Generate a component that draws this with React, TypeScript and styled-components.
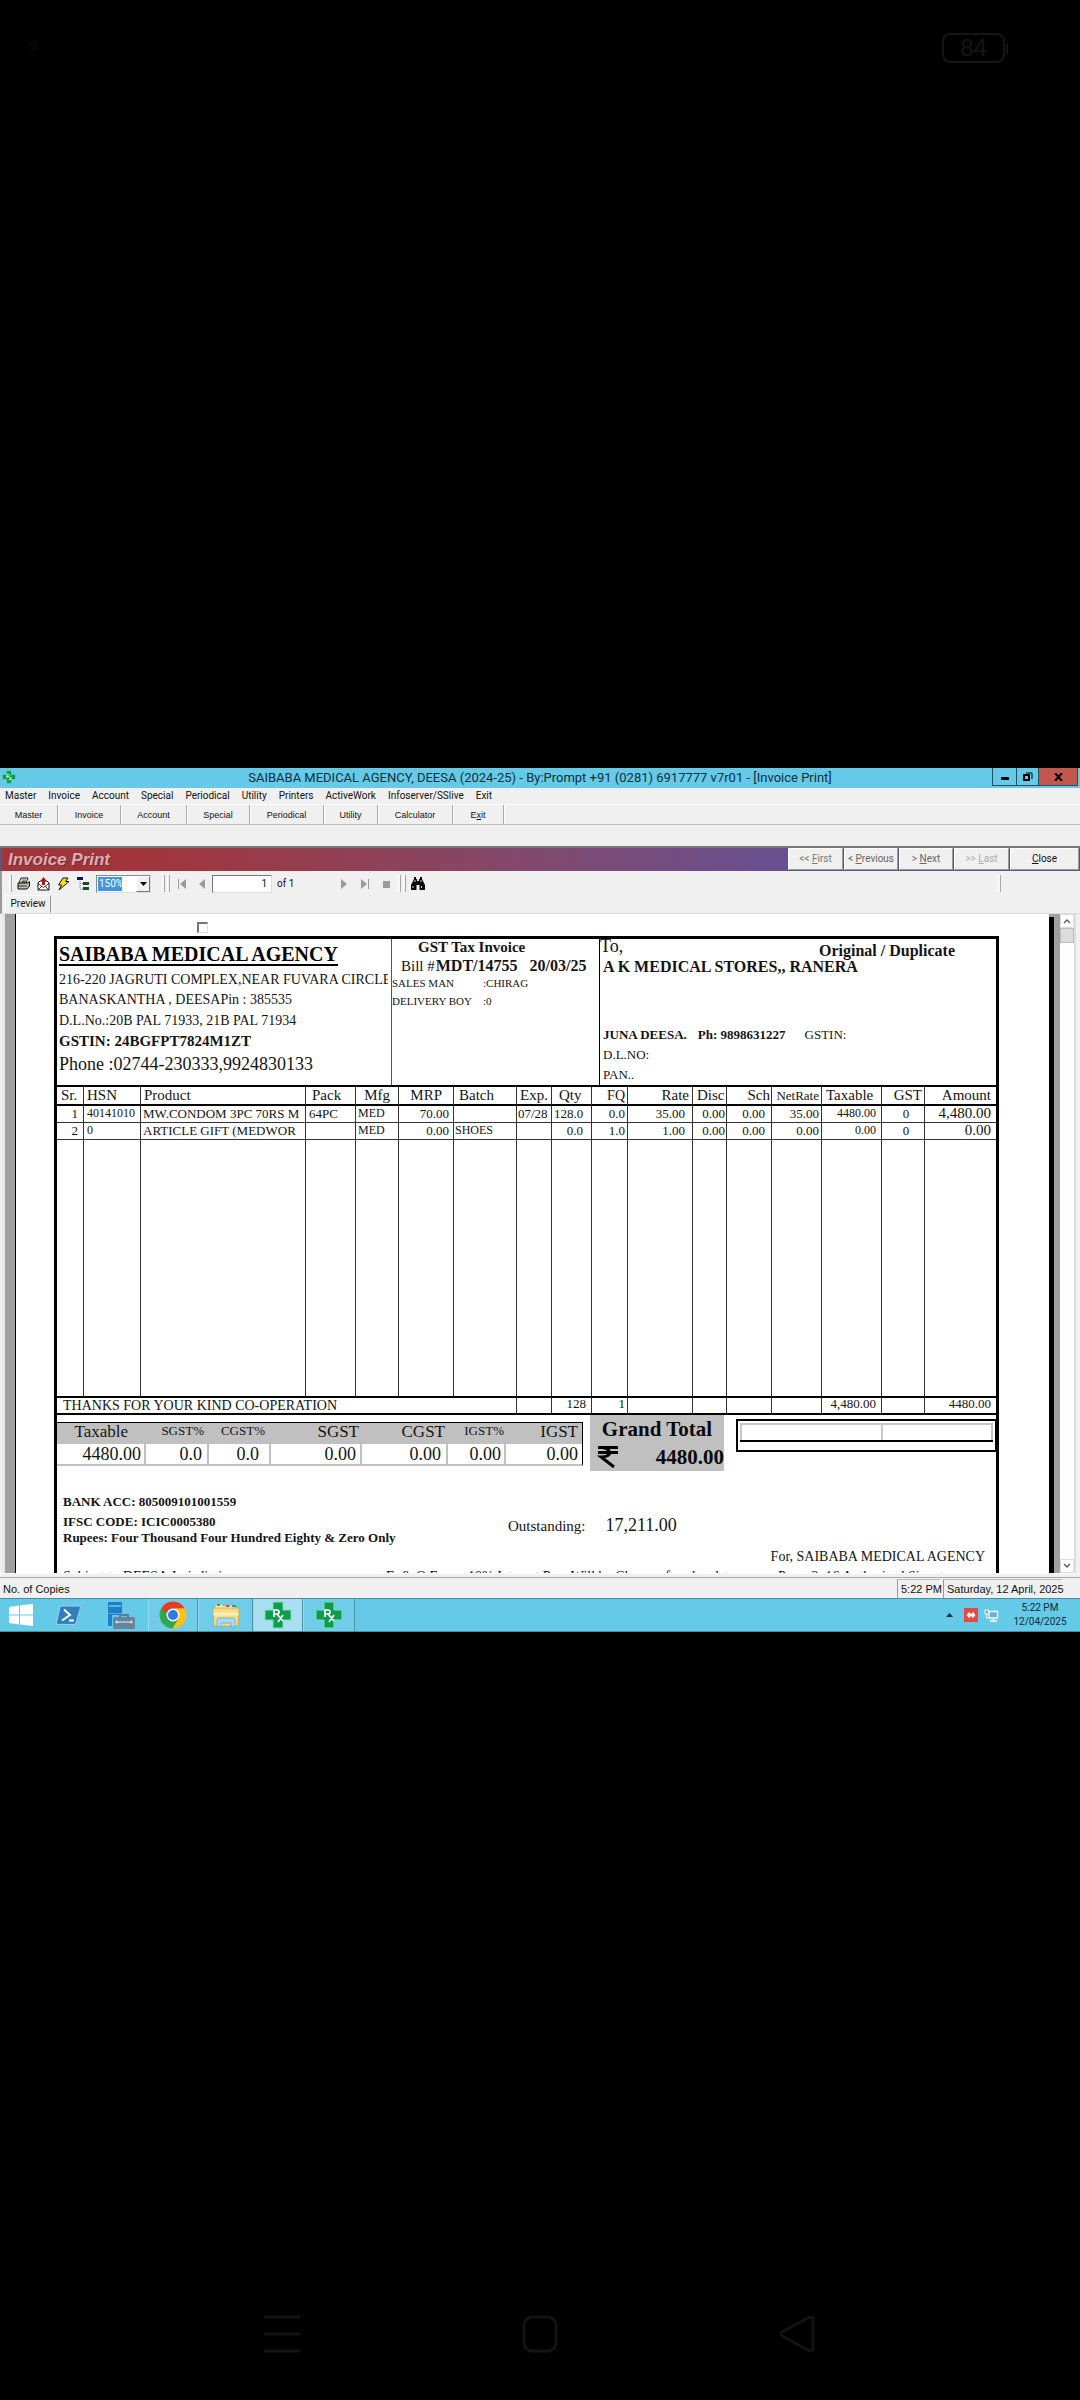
import React from "react";
import styled, { createGlobalStyle, css } from "styled-components";

const serif = `"Liberation Serif", "Times New Roman", serif`;
const sans = `"Liberation Sans", Arial, sans-serif`;
const ui = `Roboto, "Segoe UI", sans-serif`;

const GlobalStyle = createGlobalStyle`
  *, *::before, *::after { box-sizing: border-box; }
  body { margin: 0; background: #000; }
  button, input, select { font: inherit; color: inherit; margin: 0; }
  button { padding: 0; border: 0; background: none; }
`;

/* ---------- phone shell ---------- */

const Phone = styled.div`
  display: grid;
  grid-template-rows: 1fr auto 1fr;
  min-height: 100vh;
  background: #000;
`;

const PhoneTop = styled.header`
  display: flex;
  justify-content: space-between;
  align-items: flex-start;
  padding: 33px 72px 0 28px;
  color: #151515;
`;

const CameraDot = styled.i`
  width: 11px;
  height: 11px;
  margin-top: 7px;
  border-radius: 50%;
  background: #060606;
`;

const Battery = styled.div`
  display: flex;
  align-items: center;
  gap: 1px;
  font: 24px/26px ${sans};
  &::after {
    content: "";
    width: 2px;
    height: 11px;
    background: #151515;
  }
`;

const BatteryBody = styled.span`
  width: 63px;
  border: 2px solid #151515;
  border-radius: 8px;
  text-align: center;
`;

const PhoneNav = styled.nav`
  display: flex;
  justify-content: space-between;
  align-self: end;
  padding: 0 264px 47px;
`;

const NavButton = styled.button`
  width: 36px;
  height: 38px;
  color: #131313;
  svg { display: block; }
`;

/* ---------- application window ---------- */

const Window = styled.main`
  display: flex;
  flex-direction: column;
  background: #f0f0f0;
  color: #111;
  font: 10px/14px ${ui};
`;

const TitleBar = styled.header`
  display: grid;
  grid-template-columns: 88px 1fr 88px;
  height: 20px;
  background: #65c9e8;
`;

const AppIcon = styled.span`
  padding: 2px;
  svg { display: block; }
`;

const WindowTitle = styled.h1`
  margin: 0;
  font: 400 13px/20px ${ui};
  color: #10303a;
  text-align: center;
  white-space: nowrap;
`;

const WindowButtons = styled.div`
  display: flex;
  justify-content: flex-end;
  padding-right: 2px;
`;

const WindowButton = styled.button<{ $w: number; $close?: boolean }>`
  display: grid;
  place-items: center;
  width: ${(p) => p.$w}px;
  height: 18px;
  border: 1px solid #24515f;
  border-top: 0;
  margin-left: -1px;
  background: ${(p) => (p.$close ? "#c2574d" : "transparent")};
`;

const MenuBar = styled.nav`
  display: flex;
  gap: 12px;
  height: 16px;
  padding-left: 5px;
  font: 10px/16px ${ui};
`;

const MenuLink = styled.a`
  color: #111;
  text-decoration: none;
`;

const ModuleBar = styled.div`
  display: flex;
  height: 21px;
  border-top: 1px solid #fff;
  border-bottom: 1px solid #bbb;
`;

const ModuleButton = styled.button<{ $w: number }>`
  width: ${(p) => p.$w}px;
  border-right: 1px solid #aaa;
  box-shadow: 1px 0 0 #fff;
  font: 9px/18px ${sans};
`;

const FormHeader = styled.div`
  display: flex;
  height: 25px;
  margin-top: 21px;
  border-top: 2px solid #777;
  padding: 0 1px 0 2px;
  background: #5c5680;
`;

const FormTitle = styled.h2`
  flex: 1;
  margin: 0;
  padding-left: 6px;
  background: linear-gradient(90deg, #a1353b 0%, #a1353b 18%, #874665 60%, #675092 100%);
  color: #d8aeb2;
  font: italic 700 17px/24px ${sans};
  text-shadow: 1px 1px 0 #7c2c34;
`;

const FormButtons = styled.div`
  display: flex;
  gap: 1px;
`;

const FormButton = styled.button<{ $w: number; $tone: string }>`
  width: ${(p) => p.$w}px;
  margin-bottom: 1px;
  background: #f0f0f0;
  border: 1px solid;
  border-color: #fff #9a9a9a #9a9a9a #fff;
  color: ${(p) => p.$tone};
  font: 10px/20px ${ui};
`;

const ReportBar = styled.div`
  display: flex;
  align-items: center;
  height: 24px;
  padding: 1px 79px 0 7px;
  border-left: 2px solid #999;
`;

const Grip = styled.i<{ $before?: number; $after?: number }>`
  width: 3px;
  height: 17px;
  margin-left: ${(p) => p.$before ?? 0}px;
  margin-right: ${(p) => p.$after ?? 0}px;
  border-right: 1px solid #a8a8a8;
  border-left: 1px solid #fff;
`;

const ToolGroup = styled.div<{ $gap: number; $before?: number }>`
  display: flex;
  align-items: center;
  gap: ${(p) => p.$gap}px;
  margin-left: ${(p) => p.$before ?? 0}px;
`;

const Tool = styled.button`
  display: block;
  svg { display: block; }
`;

const ZoomBox = styled.span`
  display: flex;
  width: 55px;
  height: 18px;
  margin-left: 6px;
  border: 1px solid #888;
  border-right-color: #ddd;
  border-bottom-color: #ddd;
  background: #fff;
`;

const ZoomSelect = styled.select`
  flex: 1;
  min-width: 0;
  appearance: none;
  padding: 0 0 0 1px;
  border: 1px solid #fff;
  border-radius: 0;
  background: linear-gradient(90deg, #3f97e4 24px, #fff 24px);
  background-clip: padding-box;
  color: #fff;
  font: 10px/14px ${ui};
`;

const ComboArrow = styled.span`
  display: grid;
  place-items: center;
  width: 14px;
  border: 1px solid;
  border-color: #fff #777 #777 #fff;
  background: #f0f0f0;
`;

const PageLabel = styled.label`
  display: flex;
  align-items: center;
  gap: 5px;
  margin-left: 7px;
`;

const PageInput = styled.input`
  width: 60px;
  height: 18px;
  padding: 0 4px;
  border: 1px solid #777;
  border-right-color: #ddd;
  border-bottom-color: #ddd;
  background: #fff;
  text-align: right;
`;

const Spacer = styled.span`
  flex: 1;
`;

const TabStrip = styled.div`
  display: flex;
  height: 19px;
  padding-left: 3px;
  border-left: 2px solid #999;
  border-bottom: 1px solid #ddd;
`;

const Tab = styled.button`
  width: 46px;
  border: 1px solid;
  border-color: #fff #999 transparent #fff;
  font: 10px/16px ${ui};
`;

/* ---------- report viewport ---------- */

const Viewport = styled.section`
  display: grid;
  grid-template-columns: 1fr 14px;
  height: 659px;
  margin: 0 4px 0 2px;
  border-left: 3px solid #e8e8e8;
  border-right: 2px solid #ddd;
  overflow: hidden;
`;

const Canvas = styled.div`
  min-width: 0;
  padding: 0 11px 0 10px;
  overflow: hidden;
  background: #a0a0a0;
`;

const Sheet = styled.article`
  padding: 0 50px 0 38px;
  border-left: 1px solid #000;
  background: #fff;
  box-shadow: 5px 3px 0 #000;
  color: #141414;
  font-family: ${serif};
`;

const ScrollTrack = styled.div`
  display: flex;
  flex-direction: column;
  background: #fdfdfd;
`;

const ScrollButton = styled.button`
  display: grid;
  place-items: center;
  height: 14px;
  border: 1px solid #ddd;
  background: #fff;
`;

const ScrollThumb = styled.i`
  height: 15px;
  border: 1px solid #bbb;
  background: #dcdcdc;
`;

const SelectRow = styled.div`
  display: flex;
  height: 22px;
  padding: 8px 0 0 143px;
`;

const Tick = styled.input`
  appearance: none;
  width: 11px;
  height: 11px;
  border: 1px solid #ddd;
  border-top: 2px solid #777;
  border-left: 2px solid #777;
`;

const Frame = styled.div`
  border: 3px solid #000;
  border-bottom: 0;
`;

/* ---------- invoice header ---------- */

const Parties = styled.div`
  display: grid;
  grid-template-columns: 335px 208px 1fr;
  height: 146px;
`;

const Party = styled.section<{ $rule?: string; $pad?: string; $grow?: boolean }>`
  display: flex;
  flex-direction: column;
  flex: ${(p) => (p.$grow ? "1" : "initial")};
  min-width: 0;
  padding: ${(p) => p.$pad ?? "0"};
  border-right: ${(p) => (p.$rule ? `1px solid ${p.$rule}` : "0")};
`;

const Line = styled.p<{ $size: number; $lh: number; $bold?: boolean; $clip?: boolean }>`
  margin: 0;
  font-size: ${(p) => p.$size}px;
  line-height: ${(p) => p.$lh}px;
  font-weight: ${(p) => (p.$bold ? 700 : 400)};
  white-space: nowrap;
  ${(p) =>
    p.$clip &&
    css`
      margin-right: 3px;
      overflow: hidden;
    `}
`;

const AgencyName = styled.h3`
  align-self: flex-start;
  height: 23px;
  margin: 0 0 3px;
  border-bottom: 2px solid #000;
  color: #000;
  font: 700 20px/22px ${serif};
  white-space: nowrap;
`;

const InvoiceTitle = styled.h3`
  margin: 0 0 0 26px;
  font: 700 15px/16px ${serif};
`;

const BillRow = styled.div`
  display: flex;
  align-items: baseline;
  height: 19px;
  padding-left: 9px;
  font-size: 15px;
  line-height: 21px;
  white-space: nowrap;
  strong { font-size: 16px; }
  strong:first-of-type { margin: 0 12px 0 1px; }
`;

const StaffList = styled.dl`
  display: grid;
  grid-template-columns: 91px 1fr;
  margin: 0;
  font-size: 11px;
  line-height: 18px;
  dd { margin: 0; }
`;

const ToRow = styled.div`
  display: flex;
  justify-content: space-between;
  height: 18px;
  padding-right: 41px;
`;

const ContactRow = styled.div`
  display: flex;
  margin-top: auto;
  gap: 19px;
  strong + strong { margin-left: 11px; }
`;

/* ---------- item table ---------- */

const Items = styled.table`
  width: 100%;
  table-layout: fixed;
  border-collapse: separate;
  border-spacing: 0;
  border-top: 2px solid #000;
`;

type CellProps = {
  $align?: "left" | "right" | "center";
  $size?: number;
  $pr?: number;
  $pl?: number;
};

const cell = css<CellProps>`
  height: inherit;
  padding: 0 ${(p) => p.$pr ?? 2}px 0 ${(p) => p.$pl ?? 2}px;
  border-right: 1px solid #333;
  font-weight: 400;
  font-size: ${(p) => p.$size ?? 13}px;
  line-height: 15px;
  text-align: ${(p) => p.$align ?? "left"};
  vertical-align: top;
  white-space: nowrap;
  overflow: hidden;
  &:last-child { border-right: 0; }
`;

const Th = styled.th<CellProps>`
  ${cell}
  line-height: 17px;
  border-bottom: 2px solid #000;
`;

const Td = styled.td<CellProps>`
  ${cell}
  border-bottom: 1px solid #333;
`;

const BlankTd = styled.td<CellProps>`
  ${cell}
  border-bottom: 0;
`;

const TotalTd = styled.td<CellProps>`
  ${cell}
  line-height: 11px;
  border-top: 2px solid #000;
  border-bottom: 2px solid #000;
`;

const Thanks = styled.span`
  font-size: 14px;
  line-height: 15px;
`;

const Row = styled.tr<{ $h: number }>`
  height: ${(p) => p.$h}px;
`;

/* ---------- summary ---------- */

const Summary = styled.div`
  display: flex;
  align-items: flex-start;
  height: 56px;
`;

const TaxTable = styled.table`
  width: 526px;
  margin: 7px 7px 0 0;
  table-layout: fixed;
  border-collapse: separate;
  border-spacing: 0;
  border-top: 1px solid #000;
`;

const TaxTh = styled.th<{ $small?: boolean; $pr: number }>`
  height: 21px;
  padding: 0 ${(p) => p.$pr}px 0 0;
  background: #c0c0c0;
  font-size: ${(p) => (p.$small ? 13 : 17)}px;
  font-weight: 400;
  line-height: ${(p) => (p.$small ? 15 : 17)}px;
  text-align: right;
  vertical-align: top;
  &:last-child { border-right: 1px solid #000; }
`;

const TaxTd = styled.td<{ $pr: number }>`
  height: 22px;
  padding: 0 ${(p) => p.$pr}px 0 0;
  border-right: 2px solid #c0c0c0;
  border-bottom: 2px solid #c0c0c0;
  font-size: 18px;
  line-height: 20px;
  text-align: right;
  &:last-child { border-right: 1px solid #000; }
`;

const GrandTotal = styled.section`
  width: 134px;
  height: 56px;
  background: #c0c0c0;
  color: #0a0a0a;
  font-size: 21px;
  font-weight: 700;
  line-height: 28px;
`;

const GrandLabel = styled.h4`
  margin: 0;
  font: inherit;
  text-align: center;
`;

const GrandValue = styled.div`
  display: flex;
  justify-content: space-between;
  padding: 0 0 0 7px;
  svg { display: block; margin-top: 3px; }
`;

const NoteBox = styled.div`
  flex: 1;
  height: 33px;
  margin: 4px 0 0 12px;
  padding: 2px;
  border: 2px solid #000;
  border-right-width: 1px;
`;

const NoteSlots = styled.div`
  display: grid;
  grid-template-columns: 143px 1fr;
  height: 19px;
  border-bottom: 2px solid #000;
`;

const NoteSlot = styled.i`
  border: 2px solid #c8c8c8;
  border-bottom: 0;
  & + & { border-left: 0; }
`;

const Footer = styled.div`
  display: grid;
  grid-template-columns: 445px 1fr;
  height: 76px;
  padding: 21px 0 0 6px;
`;

const Outstanding = styled.div`
  display: flex;
  align-items: baseline;
  gap: 20px;
  padding-top: 23px;
  font-size: 15px;
  line-height: 20px;
  span { font-size: 18px; }
`;

const Signature = styled.p`
  margin: 0;
  padding-right: 11px;
  font-size: 14px;
  line-height: 20px;
  text-align: right;
`;

const Terms = styled.div`
  display: grid;
  grid-template-columns: 323px 82px 310px 1fr;
  padding-left: 6px;
  font-size: 14px;
  line-height: 20px;
  white-space: nowrap;
`;

/* ---------- status bar and taskbar ---------- */

const StatusBar = styled.footer`
  display: flex;
  height: 25px;
  padding: 5px 17px 0 3px;
  border-top: 1px solid #fff;
  box-shadow: inset 0 3px 0 #f0f0f0, inset 0 4px 0 #aaa;
  font: 11px/20px ${sans};
`;

const StatusPane = styled.span<{ $w: number }>`
  width: ${(p) => p.$w}px;
  margin-left: 2px;
  padding-left: 3px;
  border-left: 1px solid #999;
  border-right: 1px solid #fff;
  border-top: 1px solid #bbb;
  line-height: 18px;
  white-space: nowrap;
`;

const Taskbar = styled.nav`
  display: flex;
  height: 34px;
  border-top: 1px solid #4a8ba0;
  border-bottom: 1px solid #4a8ba0;
  background: #65c9e8;
`;

const TaskButton = styled.button<{ $w: number; $open?: boolean; $active?: boolean }>`
  display: grid;
  place-items: center;
  width: ${(p) => p.$w}px;
  border-right: ${(p) => (p.$open ? "1px solid #4793ab" : "0")};
  border-left: ${(p) => (p.$open ? "1px solid #8fdcf3" : "0")};
  background: ${(p) => (p.$active ? "#a9dff1" : p.$open ? "#6fcdea" : "transparent")};
`;

const Tray = styled.div`
  display: flex;
  align-items: center;
  gap: 6px;
  margin-left: auto;
  padding-right: 11px;
  color: #0e2c36;
  svg { display: block; }
  svg:first-child { margin-right: 5px; }
`;

const Clock = styled.time`
  width: 58px;
  margin-left: 6px;
  font: 10px/14px ${ui};
  text-align: center;
  white-space: nowrap;
`;

/* ---------- drawings ---------- */

const RxIcon = ({ size }: { size: number }) => (
  <svg width={size} height={size} viewBox="0 0 28 28" aria-hidden="true">
    <path d="M9 1h10v8h8v10h-8v8H9v-8H1V9h8z" fill="#0d9c50" stroke="#7ee0b0" strokeWidth="1" />
    <path d="M10 16V9h3a2 2 0 0 1 0 4h-3M13 13l6 7M19 14l-5 7" fill="none" stroke="#fff" strokeWidth="1.7" />
  </svg>
);

const StartIcon = () => (
  <svg width="24" height="22" viewBox="0 0 24 22" aria-hidden="true">
    <path d="M0 3l10-1.500v9H0zM11 1.300L24 0v10.500H11zM0 11.500h10v9L0 19zM11 11.500h13V22l-13-1.500z" fill="#fff" />
  </svg>
);

const ShellIcon = () => (
  <svg width="25" height="20" viewBox="0 0 25 20" aria-hidden="true">
    <path d="M5 1h18a1.500 1.500 0 0 1 1.400 2L20 18a2 2 0 0 1-2 1.400H1.500A1.200 1.200 0 0 1 .4 18L4 2a1.500 1.500 0 0 1 1-1z" fill="#2f7fc0" stroke="#a9cfe6" />
    <path d="M8 4.500l6 5.500-8 5.500M13 15.500h5" fill="none" stroke="#fff" strokeWidth="2" />
  </svg>
);

const ServerIcon = () => (
  <svg width="28" height="27" viewBox="0 0 28 27" aria-hidden="true">
    <path d="M0 0h14v24H0z" fill="#1c80c8" />
    <path d="M1 4h12" stroke="#7cc4ee" strokeWidth="1.500" />
    <path d="M0 11h14v1H0z" fill="#4fa6de" />
    <path d="M4 13h24v14H4z" fill="#65c9e8" />
    <path d="M12 15v-2h8v2" fill="none" stroke="#5d7c90" strokeWidth="2" />
    <rect x="5" y="15" width="22" height="12" rx="1.500" fill="#67849a" />
    <path d="M7 20h18M9 18.500v3M23 18.500v3" fill="none" stroke="#e4eff4" />
  </svg>
);

const ChromeIcon = () => (
  <svg width="28" height="28" viewBox="0 0 28 28" aria-hidden="true">
    <circle cx="14" cy="14" r="13.500" fill="#fbc116" />
    <path d="M2.300 7.200A13.500 13.500 0 0 0 13.500 27.500l6-10L14 14z" fill="#2da94f" />
    <path d="M2.300 7.200L8.400 17.500 14 14l2-7z" fill="#2da94f" />
    <path d="M2.300 7.200A13.500 13.500 0 0 1 25.700 7.300H14a6.800 6.800 0 0 0-6.500 4.700z" fill="#e33b2e" />
    <circle cx="14" cy="14" r="6.500" fill="#fff" />
    <circle cx="14" cy="14" r="5" fill="#2f78e6" />
  </svg>
);

const FolderIcon = () => (
  <svg width="28" height="26" viewBox="0 0 28 26" aria-hidden="true">
    <path d="M3 3l6-1 2 2 12-1v4H3z" fill="#f3ecc4" stroke="#c9a850" strokeWidth=".7" />
    <path d="M5 3h3" stroke="#3a9e4a" strokeWidth="2" />
    <path d="M14 4h3" stroke="#d2503c" strokeWidth="2" />
    <path d="M20 4h4" stroke="#3a8ccc" strokeWidth="2" />
    <path d="M1 6h26l-1 18H2z" fill="#f5dd86" stroke="#d0a848" strokeWidth=".8" />
    <path d="M1.500 12h25" stroke="#fbefb8" strokeWidth="3" />
    <path d="M5 25v-7a2 2 0 0 1 2-2h14a2 2 0 0 1 2 2v7h-4v-4H9v4z" fill="#a9dcf2" stroke="#5fa9cc" strokeWidth=".8" />
  </svg>
);

const PrintIcon = () => (
  <svg width="13" height="13" viewBox="0 0 13 13" aria-hidden="true">
    <path d="M4 1h7l-2 5H2z" fill="#fff" stroke="#111" />
    <path d="M1 6h10l1.500-1.500V9L10 12H1z" fill="#b9bcae" stroke="#111" />
    <path d="M1 9h9M5 3h4M4.500 4.500h4" stroke="#111" strokeWidth=".8" />
    <path d="M8 7.500h1.500" stroke="#e8e030" />
  </svg>
);

const ExportIcon = () => (
  <svg width="13" height="14" viewBox="0 0 13 14" aria-hidden="true">
    <path d="M1 6l2-2h7l2 2v7H1z" fill="#fff" stroke="#111" />
    <path d="M1 6.500l5.500 4 5.500-4M1 13l4-4M12 13L8 9" fill="none" stroke="#111" strokeWidth=".8" />
    <path d="M5 8V4H3.500l3-4 3 4H8v4z" fill="#b5121b" />
  </svg>
);

const BoltIcon = () => (
  <svg width="13" height="14" viewBox="0 0 13 14" aria-hidden="true">
    <path d="M6 1h5L8.500 4.500H12L2 13l2.500-5H1.500z" fill="#f4e41c" stroke="#111" />
  </svg>
);

const TreeIcon = () => (
  <svg width="13" height="13" viewBox="0 0 13 13" aria-hidden="true">
    <path d="M0 0h6v3H0z" fill="#14145c" />
    <path d="M3 4v8h3M3 6.500h3" fill="none" stroke="#777" strokeDasharray="1 1" />
    <path d="M6 5h6v3H6zM6 10h6v3H6z" fill="#174d22" />
  </svg>
);

const Arrow = ({ d, w }: { d: string; w: number }) => (
  <svg width={w} height="10" viewBox={`0 0 ${w} 10`} aria-hidden="true">
    <path d={d} fill="#9a9a9a" />
  </svg>
);

const BinocularsIcon = () => (
  <svg width="14" height="13" viewBox="0 0 14 13" aria-hidden="true">
    <path d="M3 0h2v2h1v2h2V2h1V0h2v2l1 2 2 4v5H8.500V8h-3v5H0V8l2-4 1-2z" fill="#0a0a0a" />
    <path d="M2 9v2M4 3v2M10 3v2M10.500 9v2" stroke="#fff" strokeWidth=".8" />
  </svg>
);

const Chevron = ({ d }: { d: string }) => (
  <svg width="8" height="6" viewBox="0 0 8 6" aria-hidden="true">
    <path d={d} fill="none" stroke="#555" strokeWidth="1.300" />
  </svg>
);

const RupeeIcon = () => (
  <svg width="22" height="22" viewBox="0 0 22 22" aria-hidden="true">
    <path d="M1 1.500h20M1 6.500h20M4 1.500c10 0 13 9.500 0 9.500l13 10" fill="none" stroke="#000" strokeWidth="3" />
  </svg>
);

/* ---------- data ---------- */

const menus = ["Master", "Invoice", "Account", "Special", "Periodical", "Utility", "Printers", "ActiveWork", "Infoserver/SSlive", "Exit"];

const modules: [React.ReactNode, number][] = [
  ["Master", 58],
  ["Invoice", 63],
  ["Account", 66],
  ["Special", 63],
  ["Periodical", 74],
  ["Utility", 54],
  ["Calculator", 75],
  [<>E<u>x</u>it</>, 51],
];

type Column = {
  title: string;
  width?: number;
  head: CellProps;
  body: CellProps;
  values: [string, string];
  total?: string;
};

const columns: Column[] = [
  { title: "Sr.", width: 27, head: { $size: 15, $pl: 4 }, body: { $align: "right", $pr: 5 }, values: ["1", "2"] },
  { title: "HSN", width: 57, head: { $size: 15, $pl: 3 }, body: { $size: 12, $pl: 3 }, values: ["40141010", "0"] },
  { title: "Product", head: { $size: 15, $pl: 3 }, body: { $pl: 2, $pr: 0 }, values: ["MW.CONDOM 3PC 70RS M", "ARTICLE GIFT (MEDWOR"] },
  { title: "Pack", width: 50, head: { $size: 15, $pl: 6 }, body: { $pl: 3 }, values: ["64PC", ""] },
  { title: "Mfg", width: 43, head: { $size: 15, $align: "right", $pr: 8 }, body: { $size: 12 }, values: ["MED", "MED"] },
  { title: "MRP", width: 55, head: { $size: 15, $align: "right", $pr: 11 }, body: { $align: "right", $pr: 4 }, values: ["70.00", "0.00"] },
  { title: "Batch", width: 63, head: { $size: 15, $pl: 5 }, body: { $size: 12, $pl: 1 }, values: ["", "SHOES"] },
  { title: "Exp.", width: 35, head: { $size: 15, $pl: 3 }, body: { $pl: 1 }, values: ["07/28", ""] },
  { title: "Qty", width: 40, head: { $size: 15, $pl: 7 }, body: { $align: "right", $pr: 8 }, values: ["128.0", "0.0"], total: "128" },
  { title: "FQ", width: 36, head: { $size: 14, $align: "right" }, body: { $align: "right" }, values: ["0.0", "1.0"], total: "1" },
  { title: "Rate", width: 65, head: { $size: 15, $align: "right", $pr: 3 }, body: { $align: "right", $pr: 7 }, values: ["35.00", "1.00"] },
  { title: "Disc", width: 34, head: { $size: 15, $pl: 4 }, body: { $align: "right", $pr: 1 }, values: ["0.00", "0.00"] },
  { title: "Sch", width: 45, head: { $size: 15, $align: "right", $pr: 1 }, body: { $align: "right", $pr: 6 }, values: ["0.00", "0.00"] },
  { title: "NetRate", width: 50, head: { $size: 13, $align: "right" }, body: { $align: "right" }, values: ["35.00", "0.00"] },
  { title: "Taxable", width: 60, head: { $size: 15, $pl: 4 }, body: { $size: 12, $align: "right", $pr: 5 }, values: ["4480.00", "0.00"], total: "4,480.00" },
  { title: "GST", width: 43, head: { $size: 15, $align: "right" }, body: { $size: 13, $align: "center", $pl: 8 }, values: ["0", "0"] },
  { title: "Amount", width: 71, head: { $size: 15, $align: "right", $pr: 5 }, body: { $size: 15, $align: "right", $pr: 5 }, values: ["4,480.00", "0.00"], total: "4480.00" },
];

const taxes = [
  { title: "Taxable", width: 89, value: "4480.00", pr: 3, headPr: 18 },
  { title: "SGST%", width: 63, value: "0.0", pr: 5, headPr: 5, small: true },
  { title: "CGST%", width: 62, value: "0.0", pr: 10, headPr: 6, small: true },
  { title: "SGST", width: 91, value: "0.00", pr: 4, headPr: 3 },
  { title: "CGST", width: 86, value: "0.00", pr: 5, headPr: 3 },
  { title: "IGST%", width: 58, value: "0.00", pr: 3, headPr: 2, small: true },
  { title: "IGST", width: 77, value: "0.00", pr: 4, headPr: 4 },
];

/* ---------- sections ---------- */

const ItemTable = () => (
  <Items>
    <colgroup>
      {columns.map((c) => (
        <col key={c.title} style={{ width: c.width }} />
      ))}
    </colgroup>
    <thead>
      <Row $h={19}>
        {columns.map((c) => (
          <Th key={c.title} {...c.head}>{c.title}</Th>
        ))}
      </Row>
    </thead>
    <tbody>
      {[0, 1].map((i) => (
        <Row key={i} $h={17}>
          {columns.map((c) => (
            <Td key={c.title} {...c.body}>{c.values[i]}</Td>
          ))}
        </Row>
      ))}
      <Row $h={256}>
        {columns.map((c) => (
          <BlankTd key={c.title} />
        ))}
      </Row>
    </tbody>
    <tfoot>
      <Row $h={19}>
        <TotalTd colSpan={7} $pl={6}><Thanks>THANKS FOR YOUR KIND CO-OPERATION</Thanks></TotalTd>
        {columns.slice(7).map((c) => (
          <TotalTd key={c.title} $align="right" $pr={c.title === "Qty" ? 5 : c.body.$pr}>{c.total}</TotalTd>
        ))}
      </Row>
    </tfoot>
  </Items>
);

const Invoice = () => (
  <Sheet>
    <SelectRow>
      <Tick type="checkbox" aria-label="Select invoice" />
    </SelectRow>
    <Frame>
      <Parties>
        <Party $rule="#555" $pad="4px 0 0 2px">
          <AgencyName>SAIBABA MEDICAL AGENCY</AgencyName>
          <Line $size={14} $lh={21} $clip>216-220 JAGRUTI COMPLEX,NEAR FUVARA CIRCLE</Line>
          <Line $size={14} $lh={20}>BANASKANTHA , DEESAPin : 385535</Line>
          <Line $size={14} $lh={21}>D.L.No.:20B PAL 71933, 21B PAL 71934</Line>
          <Line $size={15} $lh={21} $bold>GSTIN: 24BGFPT7824M1ZT</Line>
          <Line $size={18} $lh={24}>Phone :02744-230333,9924830133</Line>
        </Party>
        <Party $rule="#000">
          <InvoiceTitle>GST Tax Invoice</InvoiceTitle>
          <BillRow>
            Bill # <strong>MDT/14755</strong> <strong>20/03/25</strong>
          </BillRow>
          <StaffList>
            <dt>SALES MAN</dt>
            <dd>:CHIRAG</dd>
            <dt>DELIVERY BOY</dt>
            <dd>:0</dd>
          </StaffList>
        </Party>
        <Party>
          <ToRow>
            <Line $size={18} $lh={14}>To,</Line>
            <Line $size={16} $lh={24} $bold>Original / Duplicate</Line>
          </ToRow>
          <Party $pad="0 0 0 3px" $grow>
            <Line $size={16} $lh={19} $bold>A K MEDICAL STORES,, RANERA</Line>
            <ContactRow>
              <Line $size={13} $lh={20}>
                <strong>JUNA DEESA.</strong>
                <strong>Ph: 9898631227</strong>
              </Line>
              <Line $size={13} $lh={20}>GSTIN:</Line>
            </ContactRow>
            <Line $size={13} $lh={20}>D.L.NO:</Line>
            <Line $size={13} $lh={20}>PAN..</Line>
          </Party>
        </Party>
      </Parties>
      <ItemTable />
      <Summary>
        <TaxTable>
          <colgroup>
            {taxes.map((t) => (
              <col key={t.title} style={{ width: t.width }} />
            ))}
          </colgroup>
          <thead>
            <tr>
              {taxes.map((t) => (
                <TaxTh key={t.title} $small={t.small} $pr={t.headPr}>{t.title}</TaxTh>
              ))}
            </tr>
          </thead>
          <tbody>
            <tr>
              {taxes.map((t) => (
                <TaxTd key={t.title} $pr={t.pr}>{t.value}</TaxTd>
              ))}
            </tr>
          </tbody>
        </TaxTable>
        <GrandTotal>
          <GrandLabel>Grand Total</GrandLabel>
          <GrandValue>
            <RupeeIcon />
            <span>4480.00</span>
          </GrandValue>
        </GrandTotal>
        <NoteBox>
          <NoteSlots>
            <NoteSlot />
            <NoteSlot />
          </NoteSlots>
        </NoteBox>
      </Summary>
      <Footer>
        <div>
          <Line $size={13} $lh={20} $bold>BANK ACC: 805009101001559</Line>
          <Line $size={13} $lh={20} $bold>IFSC CODE: ICIC0005380</Line>
          <Line $size={13} $lh={12} $bold>Rupees: Four Thousand Four Hundred Eighty &amp; Zero Only</Line>
        </div>
        <Outstanding>
          Outstanding: <span>17,211.00</span>
        </Outstanding>
      </Footer>
      <Signature>For, SAIBABA MEDICAL AGENCY</Signature>
      <Terms>
        <span>Subject to DEESA Jurisdiction</span>
        <span>E. &amp; O.E.</span>
        <span>18% Interest Per.. Will be Charge after due date</span>
        <span>Prop. 2. 16 Authorised Signatory</span>
      </Terms>
    </Frame>
  </Sheet>
);

export default function App() {
  return (
    <>
      <GlobalStyle />
      <Phone>
        <PhoneTop>
          <CameraDot />
          <Battery>
            <BatteryBody>84</BatteryBody>
          </Battery>
        </PhoneTop>

        <Window>
          <TitleBar>
            <AppIcon><RxIcon size={14} /></AppIcon>
            <WindowTitle>SAIBABA MEDICAL AGENCY, DEESA (2024-25) - By:Prompt +91 (0281) 6917777 v7r01 - [Invoice Print]</WindowTitle>
            <WindowButtons>
              <WindowButton $w={25} aria-label="Minimize">
                <svg width="10" height="8"><path d="M1 4h8v3H1z" fill="#000" /></svg>
              </WindowButton>
              <WindowButton $w={23} aria-label="Restore">
                <svg width="10" height="9"><path d="M1 3h5v5H1z" fill="none" stroke="#000" strokeWidth="2" /><path d="M3 1h6v6" fill="none" stroke="#000" /></svg>
              </WindowButton>
              <WindowButton $w={40} $close aria-label="Close window">
                <svg width="9" height="8"><path d="M1 0l7 8M8 0L1 8" stroke="#000" strokeWidth="2" /></svg>
              </WindowButton>
            </WindowButtons>
          </TitleBar>

          <MenuBar>
            {menus.map((m) => (
              <MenuLink key={m} href="#">{m}</MenuLink>
            ))}
          </MenuBar>

          <ModuleBar>
            {modules.map(([label, w], i) => (
              <ModuleButton key={i} $w={w}>{label}</ModuleButton>
            ))}
          </ModuleBar>

          <FormHeader>
            <FormTitle>Invoice Print</FormTitle>
            <FormButtons>
              <FormButton $w={55} $tone="#777">&lt;&lt; <u>F</u>irst</FormButton>
              <FormButton $w={54} $tone="#666">&lt; <u>P</u>revious</FormButton>
              <FormButton $w={54} $tone="#666">&gt; <u>N</u>ext</FormButton>
              <FormButton $w={55} $tone="#aaa">&gt;&gt; <u>L</u>ast</FormButton>
              <FormButton $w={69} $tone="#111"><u>C</u>lose</FormButton>
            </FormButtons>
          </FormHeader>

          <ReportBar>
            <Grip $after={5} />
            <ToolGroup $gap={7}>
              <Tool aria-label="Print"><PrintIcon /></Tool>
              <Tool aria-label="Export"><ExportIcon /></Tool>
              <Tool aria-label="Refresh"><BoltIcon /></Tool>
              <Tool aria-label="Group tree"><TreeIcon /></Tool>
            </ToolGroup>
            <ZoomBox>
              <ZoomSelect aria-label="Zoom" defaultValue="150%">
                <option>150%</option>
                <option>100%</option>
              </ZoomSelect>
              <ComboArrow>
                <svg width="7" height="4"><path d="M0 0h7L3.500 4z" fill="#000" /></svg>
              </ComboArrow>
            </ZoomBox>
            <Grip $before={11} $after={2} />
            <Grip $after={8} />
            <ToolGroup $gap={13}>
              <Tool aria-label="First page"><Arrow w={8} d="M0 0h1v10H0zM8 0v10L2 5z" /></Tool>
              <Tool aria-label="Previous page"><Arrow w={6} d="M6 0v10L0 5z" /></Tool>
            </ToolGroup>
            <PageLabel>
              <PageInput defaultValue="1" aria-label="Page" />
              of 1
            </PageLabel>
            <ToolGroup $gap={14} $before={47}>
              <Tool aria-label="Next page"><Arrow w={6} d="M0 0v10l6-5z" /></Tool>
              <Tool aria-label="Last page"><Arrow w={8} d="M0 0v10l6-5zM7 0h1v10H7z" /></Tool>
              <Tool aria-label="Stop"><Arrow w={7} d="M0 2h7v7H0z" /></Tool>
            </ToolGroup>
            <Grip $before={8} $after={2} />
            <Grip $after={5} />
            <Tool aria-label="Find"><BinocularsIcon /></Tool>
            <Spacer />
            <Grip />
          </ReportBar>

          <TabStrip>
            <Tab>Preview</Tab>
          </TabStrip>

          <Viewport>
            <Canvas>
              <Invoice />
            </Canvas>
            <ScrollTrack>
              <ScrollButton aria-label="Scroll up"><Chevron d="M1 5l3-3 3 3" /></ScrollButton>
              <ScrollThumb />
              <Spacer />
              <ScrollButton aria-label="Scroll down"><Chevron d="M1 1l3 3 3-3" /></ScrollButton>
            </ScrollTrack>
          </Viewport>

          <StatusBar>
            <span>No. of Copies</span>
            <Spacer />
            <StatusPane $w={44}>5:22 PM</StatusPane>
            <StatusPane $w={120}>Saturday, 12 April, 2025</StatusPane>
          </StatusBar>

          <Taskbar>
            <TaskButton $w={42} aria-label="Start"><StartIcon /></TaskButton>
            <TaskButton $w={53} aria-label="PowerShell"><ShellIcon /></TaskButton>
            <TaskButton $w={53} aria-label="Server Manager"><ServerIcon /></TaskButton>
            <TaskButton $w={50} $open aria-label="Chrome"><ChromeIcon /></TaskButton>
            <TaskButton $w={55} $open aria-label="File Explorer"><FolderIcon /></TaskButton>
            <TaskButton $w={50} $open $active aria-label="Pharmacy, window 1"><RxIcon size={28} /></TaskButton>
            <TaskButton $w={52} $open aria-label="Pharmacy, window 2"><RxIcon size={28} /></TaskButton>
            <Tray>
              <svg width="7" height="4"><path d="M0 4h7L3.500 0z" fill="#0e2c36" /></svg>
              <svg width="14" height="14" viewBox="0 0 14 14">
                <path d="M0 0h14v14H0z" fill="#e8483f" />
                <path d="M5 4L2.500 7 5 10l2-2 2 2 2.500-3L9 4 7 6z" fill="#fff" />
              </svg>
              <svg width="15" height="13" viewBox="0 0 15 13">
                <path d="M5 2.500h8.500v6.500H5zM9.500 9v3M6 12h7" fill="#65b4cc" stroke="#f4fcff" strokeWidth="1.300" />
                <path d="M1 1h3.500v4H1zM2.500 5v4H5" fill="#65b4cc" stroke="#f4fcff" />
              </svg>
              <Clock>
                5:22 PM
                <br />
                12/04/2025
              </Clock>
            </Tray>
          </Taskbar>
        </Window>

        <PhoneNav>
          <NavButton aria-label="Recent apps">
            <svg width="36" height="38"><path d="M0 2h36M0 19h36M0 36h36" stroke="#131313" strokeWidth="3" /></svg>
          </NavButton>
          <NavButton aria-label="Home">
            <svg width="36" height="38"><rect x="2" y="2" width="32" height="34" rx="8" fill="none" stroke="#131313" strokeWidth="3" /></svg>
          </NavButton>
          <NavButton aria-label="Back">
            <svg width="36" height="38"><path d="M3 16.500L29 2.500q4-1 4 2v29q0 3-4 2L3 21.500q-3-2.500 0-5z" fill="none" stroke="#131313" strokeWidth="3" /></svg>
          </NavButton>
        </PhoneNav>
      </Phone>
    </>
  );
}
